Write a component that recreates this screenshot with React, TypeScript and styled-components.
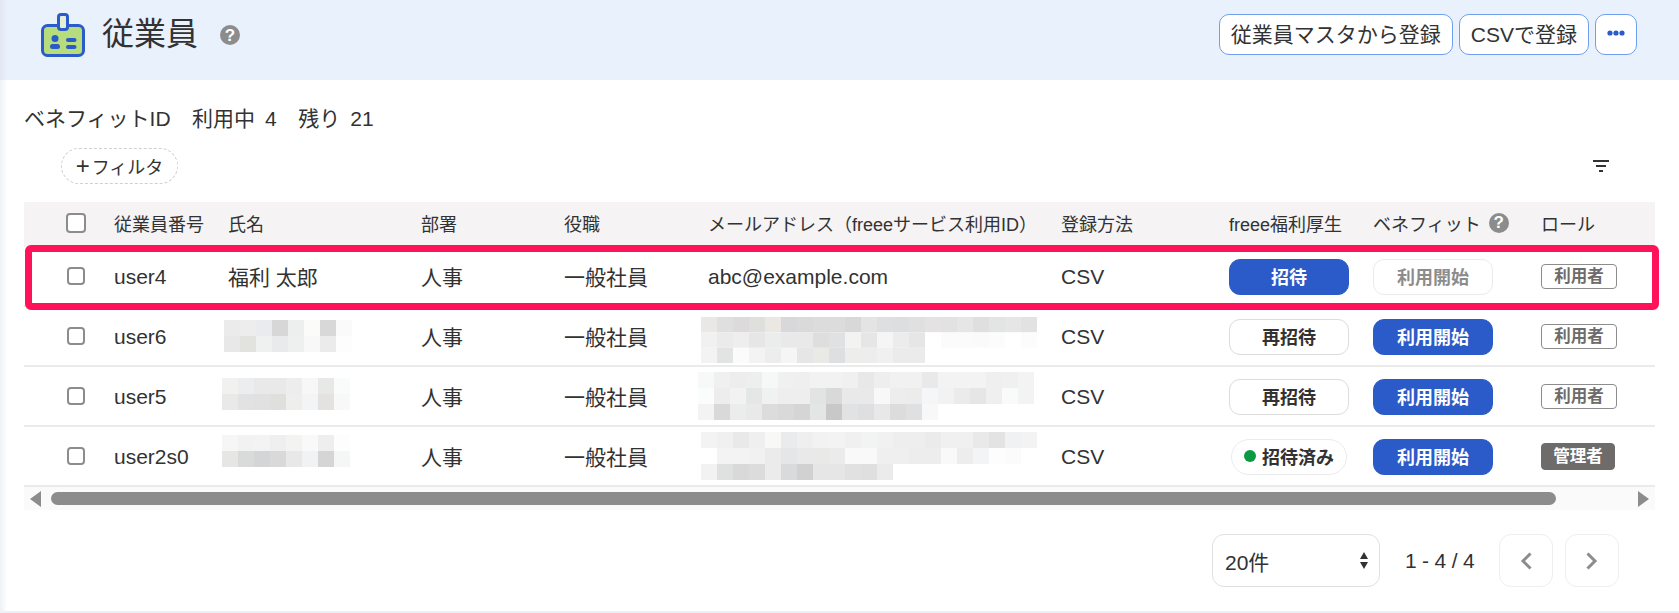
import React from "react";
import styled, { createGlobalStyle } from "styled-components";

const Global = createGlobalStyle`
  html, body { margin: 0; padding: 0; background: #fff; }
  body {
    font-family: "Liberation Sans", "Noto Sans CJK JP", sans-serif;
    color: #323232;
    font-size: 21px;
  }
`;

const Page = styled.div`
  width: 1679px;
  height: 613px;
  overflow: hidden;
  box-sizing: border-box;
  border-bottom: 2px solid #e9f1fd;
  background: linear-gradient(90deg, #eef0f3 0, #fff 7px);
`;

const Header = styled.header`
  height: 80px;
  box-sizing: border-box;
  padding: 0 42px 0 41px;
  display: flex;
  align-items: center;
  background: linear-gradient(90deg, #e1e7f0 0, #e9f1fd 7px);
`;

const IconSlot = styled.div`
  display: flex;
  margin-bottom: 10px;
`;

const Title = styled.h1`
  margin: 0 0 0 17px;
  font-size: 32px;
  font-weight: 400;
  line-height: 1;
  padding-bottom: 12px;
`;

const Help = styled.span<{ $size: number }>`
  width: ${(p) => p.$size}px;
  height: ${(p) => p.$size}px;
  border-radius: 50%;
  background: #8c8c8c;
  color: #fff;
  font-size: ${(p) => p.$size - 3}px;
  font-weight: 700;
  display: inline-flex;
  align-items: center;
  justify-content: center;
  line-height: 1;
  flex: none;
`;

const TitleHelp = styled(Help)`
  margin-left: 22px;
  margin-bottom: 10px;
`;

const Actions = styled.div`
  margin-left: auto;
  display: flex;
  gap: 6px;
  margin-bottom: 11px;
`;

const ActionButton = styled.button`
  height: 41px;
  box-sizing: border-box;
  padding: 0 11px 3px;
  border: 1.5px solid #6f9fee;
  border-radius: 10px;
  background: #fff;
  color: #323232;
  font: inherit;
  font-size: 21px;
  white-space: nowrap;
  display: flex;
  align-items: center;
`;

const Summary = styled.div`
  margin: 23px 0 0 24px;
  height: 32px;
  line-height: 32px;
  display: flex;
  gap: 21.5px;
  white-space: nowrap;
`;

const SummaryItem = styled.span`
  display: inline-flex;
  gap: 10px;
`;

const FilterRow = styled.div`
  margin-top: 13px;
  height: 36px;
  padding: 0 70px 0 61px;
  display: flex;
  align-items: center;
  justify-content: space-between;
`;

const FilterButton = styled.button`
  width: 117px;
  height: 36px;
  box-sizing: border-box;
  border: 1.5px dashed #d0d0d0;
  border-radius: 18px;
  background: #fff;
  color: #323232;
  font: inherit;
  font-size: 18px;
  padding: 0;
  display: flex;
  align-items: center;
  justify-content: center;
  gap: 2px;
  white-space: nowrap;
`;

const Plus = styled.span`
  font-size: 24px;
  line-height: 1;
`;

const TableWrap = styled.div`
  position: relative;
  margin: 18px 0 0 24px;
  width: 1631px;
`;

const Highlight = styled.div`
  position: absolute;
  top: 43px;
  left: 1px;
  width: 1634px;
  height: 65px;
  box-sizing: border-box;
  border: 7px solid #ff125a;
  border-radius: 6px;
  pointer-events: none;
`;

const columns = "90px 114px 193px 143px 144px 353px 168px 144px 168px 114px";

const HeadRow = styled.div`
  display: grid;
  grid-template-columns: ${columns};
  align-items: center;
  height: 45px;
  padding-bottom: 4px;
  box-sizing: border-box;
  background: #f5f3f4;
  font-size: 18px;
  white-space: nowrap;
`;

const Row = styled.div`
  display: grid;
  grid-template-columns: ${columns};
  align-items: center;
  height: 60px;
  box-sizing: border-box;
  border-bottom: 2px solid #ebebeb;
  white-space: nowrap;
`;

const CheckCell = styled.div`
  padding-left: 42px;
  display: flex;
  align-items: center;
`;

const Check = styled.input.attrs({ type: "checkbox" })<{ $size: number }>`
  appearance: none;
  margin: 0 0 0 ${(p) => (20 - p.$size) / 2}px;
  width: ${(p) => p.$size}px;
  height: ${(p) => p.$size}px;
  box-sizing: border-box;
  border: 2px solid #8c8c8c;
  border-radius: 4px;
  background: #fff;
`;

const LatinCell = styled.div`
  padding-top: 2px;
`;

const ControlCell = styled.div`
  display: flex;
  align-items: center;
  padding-top: 2px;
`;

const HeadBenefit = styled.div`
  display: flex;
  align-items: center;
  gap: 8px;
`;

const Action = styled.button<{ $kind: "primary" | "outline" | "disabled" }>`
  width: 120px;
  height: 36px;
  box-sizing: border-box;
  border-radius: 11px;
  font: inherit;
  font-size: 18px;
  font-weight: 700;
  padding: 0 0 3px;
  border: 1.5px solid
    ${(p) => (p.$kind === "primary" ? "#2a5bc8" : p.$kind === "outline" ? "#dcdcdc" : "#ebebeb")};
  background: ${(p) => (p.$kind === "primary" ? "#2a5bc8" : "#fff")};
  color: ${(p) => (p.$kind === "primary" ? "#fff" : p.$kind === "outline" ? "#323232" : "#8c8c8c")};
`;

const InvitedPill = styled.span`
  margin-left: 2px;
  width: 116px;
  height: 36px;
  box-sizing: border-box;
  border: 1.5px solid #ebebeb;
  border-radius: 18px;
  font-size: 18px;
  font-weight: 700;
  padding-bottom: 2px;
  display: flex;
  align-items: center;
  justify-content: center;
  gap: 6px;
`;

const Dot = styled.span`
  width: 12px;
  height: 12px;
  border-radius: 50%;
  background: #0a9a44;
`;

const Tag = styled.span<{ $admin?: boolean }>`
  display: inline-flex;
  align-items: center;
  justify-content: center;
  width: ${(p) => (p.$admin ? 74 : 76)}px;
  height: ${(p) => (p.$admin ? 27 : 25)}px;
  box-sizing: border-box;
  border-radius: 4px;
  padding-bottom: 2px;
  font-size: 16.5px;
  font-weight: 700;
  border: 1.5px solid ${(p) => (p.$admin ? "#6e6b6b" : "#8c8c8c")};
  background: ${(p) => (p.$admin ? "#6e6b6b" : "#fff")};
  color: ${(p) => (p.$admin ? "#fff" : "#6e6b6b")};
`;

const MosaicSvg = styled.svg<{ $dx: number; $dy: number }>`
  display: block;
  transform: translate(${(p) => p.$dx}px, ${(p) => p.$dy}px);
`;

function Mosaic({ lines, dx, dy, rowH = 16 }: { lines: string[]; dx: number; dy: number; rowH?: number }) {
  const cols = lines[0].split(" ").length;
  const h = lines.length * rowH;
  return (
    <MosaicSvg $dx={dx} $dy={dy} width={cols * 16} height={h} viewBox={`0 0 ${cols * 16} ${h}`}>
      {lines.map((line, y) =>
        line.split(" ").map((c, x) => <rect key={`${x}-${y}`} x={x * 16} y={y * rowH} width={16} height={rowH} fill={`#${c}`} />)
      )}
    </MosaicSvg>
  );
}

const Scrollbar = styled.div`
  height: 23px;
  box-sizing: border-box;
  padding: 0 6px 0 6px;
  display: flex;
  align-items: center;
  background: #fafafa;
`;

const Thumb = styled.div`
  width: 1505px;
  height: 13px;
  margin: 0 82px 0 10px;
  border-radius: 7px;
  background: #8c8c8c;
`;

const Pager = styled.div`
  margin: 24px 0 0 1212px;
  display: flex;
  align-items: center;
  height: 53px;
`;

const PageSize = styled.div`
  width: 168px;
  height: 53px;
  box-sizing: border-box;
  border: 1.5px solid #e0e0e0;
  border-radius: 12px;
  padding: 0 11px 0 12px;
  display: flex;
  align-items: center;
  justify-content: space-between;
`;

const Range = styled.span`
  margin: 0 24px 0 25px;
  width: 70px;
  white-space: nowrap;
  letter-spacing: -0.2px;
`;

const PageButton = styled.button`
  width: 54px;
  height: 53px;
  box-sizing: border-box;
  border: 1.5px solid #eeeeee;
  border-radius: 12px;
  background: #fff;
  padding: 0;
  display: flex;
  align-items: center;
  justify-content: center;
  & + & {
    margin-left: 12px;
  }
`;

const IdIcon = () => (
  <svg width="44" height="44" viewBox="0 0 44 44" fill="none">
    <rect x="1.5" y="12.5" width="41" height="30" rx="5" fill="#b6dc7e" stroke="#2a5bc8" strokeWidth="3" />
    <rect x="16" y="0" width="12" height="18" rx="4" fill="#2a5bc8" />
    <rect x="19" y="3" width="6" height="12" rx="1" fill="#e4efd6" />
    <circle cx="14" cy="25.5" r="3.5" fill="#2a5bc8" />
    <rect x="9" y="31" width="10" height="5" rx="2.5" fill="#2a5bc8" />
    <rect x="25" y="25" width="10.5" height="4" rx="2" fill="#2a5bc8" />
    <rect x="25" y="32" width="10.5" height="4" rx="2" fill="#2a5bc8" />
  </svg>
);

const Dots = () => (
  <svg width="18" height="6" viewBox="0 0 18 6" fill="#2a5bc8">
    <circle cx="3" cy="3" r="2.6" />
    <circle cx="9" cy="3" r="2.6" />
    <circle cx="15" cy="3" r="2.6" />
  </svg>
);

const FilterIcon = () => (
  <svg width="16" height="12" viewBox="0 0 16 12" fill="#323232">
    <rect x="0" y="0" width="16" height="2" />
    <rect x="3" y="5" width="10" height="2" />
    <rect x="6" y="10" width="4" height="2" />
  </svg>
);

const Triangle = ({ dir }: { dir: "left" | "right" }) => (
  <svg width="11" height="16" viewBox="0 0 11 16" fill="#8c8c8c">
    {dir === "left" ? <path d="M11 0v16L0 8z" /> : <path d="M0 0v16l11-8z" />}
  </svg>
);

const SortArrows = () => (
  <svg width="8" height="17" viewBox="0 0 8 17" fill="#323232">
    <path d="M4 0l4 7H0z" />
    <path d="M4 17L0 10h8z" />
  </svg>
);

const Chevron = ({ dir }: { dir: "left" | "right" }) => (
  <svg width="12" height="18" viewBox="0 0 12 18" fill="none" stroke="#8c8c8c" strokeWidth="3">
    {dir === "left" ? <path d="M10.5 1.5L3 9l7.5 7.5" /> : <path d="M1.5 1.5L9 9l-7.5 7.5" />}
  </svg>
);

type Rec = {
  id: string;
  name: React.ReactNode;
  mail: React.ReactNode;
  freee: React.ReactNode;
  benefit: React.ReactNode;
  role: React.ReactNode;
};

const startBtn = <Action $kind="primary">利用開始</Action>;
const userTag = <Tag>利用者</Tag>;

const rows: Rec[] = [
  {
    id: "user4",
    name: "福利 太郎",
    mail: <LatinCell>abc@example.com</LatinCell>,
    freee: <Action $kind="primary">招待</Action>,
    benefit: <Action $kind="disabled">利用開始</Action>,
    role: userTag,
  },
  {
    id: "user6",
    name: (
      <Mosaic
        dx={-4}
        dy={0}
        lines={[
          "ebebeb ededed e9ebee d7d7d7 edefef fbfbf9 d8d8d8 fafafa",
          "e8e8e8 e2e2df eff0f0 e8eaec eeefef f8f8f8 ebebeb fdfdfd",
        ]}
      />
    ),
    mail: (
      <Mosaic
        dx={-7}
        dy={4}
        rowH={15.4}
        lines={[
          "e9e8e6 dfdfdf dcdadb dfdfdd ebe8e4 d8d8da dadada dcdcdc dcdcdc d8d8d8 e4e4e4 dedfe0 dcdee0 dfe0df e4e2e2 e2e2e2 e6e6e6 dfdfdf e3e4e4 e6e6e6 e2e2e2",
          "f1f1f1 ebebeb eeeeee e6e6e6 ebeded e9e9e9 e9e9e9 dedede dfe1e3 f3f3f1 e6e6e6 f5f5f5 ececec e6e6e6 ffffff fbfbfb fbfbfb fafafa fcfcfc ffffff fcfcfc",
          "f3f3f3 e2e4e4 fbfbfb f3f3f3 ededed f5f5f5 e6e6e6 e9e9e6 dedfe1 ededeb ededed f0f0f0 ebebeb ebebeb ffffff ffffff ffffff ffffff ffffff ffffff ffffff",
        ]}
      />
    ),
    freee: <Action $kind="outline">再招待</Action>,
    benefit: startBtn,
    role: userTag,
  },
  {
    id: "user5",
    name: (
      <Mosaic
        dx={-6}
        dy={-2}
        lines={[
          "f1f1f0 ebedee e9e9e9 e9e9e9 ededed f7f7f7 e8e8e8 fafbfb",
          "e9e9e9 e2e2e2 e1e1e1 dfdfdd eeeeec f3f4f5 e3e2e0 f8f8f8",
        ]}
      />
    ),
    mail: (
      <Mosaic
        dx={-10}
        dy={0}
        lines={[
          "f7f8f8 f0f0f0 ededed edefef f6f7f7 f0f0f0 efefef f2f2f2 f2f2f2 f0f0f0 e8e8e8 eeeeee f1f1f1 f1f1f1 e9e9e9 f3f3f3 f3f3f3 f3f3f3 efefef f0f0f0 f3f3f3",
          "fbfcfc ededed f2f2f2 e5e6e6 f0f1f1 eeeeee eeeeee e2e4e4 d9d9d9 e9e9e9 e9e9e9 f8f8f8 ededed ecedeb f5f6f8 f2f2f2 ebebeb e6e6e6 efefef f9fafa f3f3f3",
          "f3f3f3 d9d9d9 ebeded e9e9e9 dcdcdc d9d9d9 d5d5d5 e4e6e6 c8c8c8 e0e2e4 dfdfe1 e8e8e8 dcdcdc dfe0e2 f8f8f8 ffffff ffffff ffffff ffffff ffffff ffffff",
        ]}
      />
    ),
    freee: <Action $kind="outline">再招待</Action>,
    benefit: startBtn,
    role: userTag,
  },
  {
    id: "user2s0",
    name: (
      <Mosaic
        dx={-6}
        dy={-5}
        lines={[
          "f6f6f6 f2f2f2 f3f3f3 efefef f3f3f1 f9f9f9 eeeeee fdfdfd",
          "e6e6e4 d9dbdb d4d5d7 d9d9d9 e8e8e8 f1f2f4 d6d5d6 f5f6f6",
        ]}
      />
    ),
    mail: (
      <Mosaic
        dx={-7}
        dy={0}
        lines={[
          "f3f3f3 f0f0f0 e9e9e9 efefef f8f8f6 e9ebed efefef f2f2f2 f3f3f3 f0f0f0 f2f3f3 f1f1f1 eeeeee eeeeee ebebeb f0f0f0 f0f0f0 e9e9e9 e3e3e3 f0f1f3 f3f3f3",
          "ffffff f3f3f3 f3f3f3 f1f1f1 ebebeb e4e6e8 e9e9e9 e9e9e7 ebebeb f9f9f9 f9f9f9 efefef efefef ededed ededed f9f9f9 ededed f3f4f6 fdfdfd fbfbfb ffffff",
          "f2f2f2 dfe1e1 d9d9d9 dcdcdc ebebeb d9dadc d1d1d1 e6e6e6 e6e6e6 e1e1e1 dfdfdf ebebeb ffffff ffffff ffffff ffffff ffffff ffffff ffffff ffffff ffffff",
        ]}
      />
    ),
    freee: (
      <InvitedPill>
        <Dot />
        招待済み
      </InvitedPill>
    ),
    benefit: startBtn,
    role: <Tag $admin>管理者</Tag>,
  },
];

export default function App() {
  return (
    <Page>
      <Global />
      <Header>
        <IconSlot>
          <IdIcon />
        </IconSlot>
        <Title>従業員</Title>
        <TitleHelp $size={20}>?</TitleHelp>
        <Actions>
          <ActionButton>従業員マスタから登録</ActionButton>
          <ActionButton>CSVで登録</ActionButton>
          <ActionButton>
            <Dots />
          </ActionButton>
        </Actions>
      </Header>
      <Summary>
        <span>ベネフィットID</span>
        <SummaryItem>
          <span>利用中</span>
          <span>4</span>
        </SummaryItem>
        <SummaryItem>
          <span>残り</span>
          <span>21</span>
        </SummaryItem>
      </Summary>
      <FilterRow>
        <FilterButton>
          <Plus>+</Plus>フィルタ
        </FilterButton>
        <FilterIcon />
      </FilterRow>
      <TableWrap>
        <HeadRow>
          <CheckCell>
            <Check $size={20} />
          </CheckCell>
          <div>従業員番号</div>
          <div>氏名</div>
          <div>部署</div>
          <div>役職</div>
          <div>メールアドレス（freeeサービス利用ID）</div>
          <div>登録方法</div>
          <div>freee福利厚生</div>
          <HeadBenefit>
            ベネフィット<Help $size={20}>?</Help>
          </HeadBenefit>
          <div>ロール</div>
        </HeadRow>
        {rows.map((r) => (
          <Row key={r.id}>
            <CheckCell>
              <Check $size={18} />
            </CheckCell>
            <LatinCell>{r.id}</LatinCell>
            <div>{r.name}</div>
            <div>人事</div>
            <div>一般社員</div>
            <div>{r.mail}</div>
            <LatinCell>CSV</LatinCell>
            <ControlCell>{r.freee}</ControlCell>
            <ControlCell>{r.benefit}</ControlCell>
            <div>{r.role}</div>
          </Row>
        ))}
        <Scrollbar>
          <Triangle dir="left" />
          <Thumb />
          <Triangle dir="right" />
        </Scrollbar>
        <Highlight />
      </TableWrap>
      <Pager>
        <PageSize>
          <span>20件</span>
          <SortArrows />
        </PageSize>
        <Range>1 - 4 / 4</Range>
        <PageButton>
          <Chevron dir="left" />
        </PageButton>
        <PageButton>
          <Chevron dir="right" />
        </PageButton>
      </Pager>
    </Page>
  );
}
